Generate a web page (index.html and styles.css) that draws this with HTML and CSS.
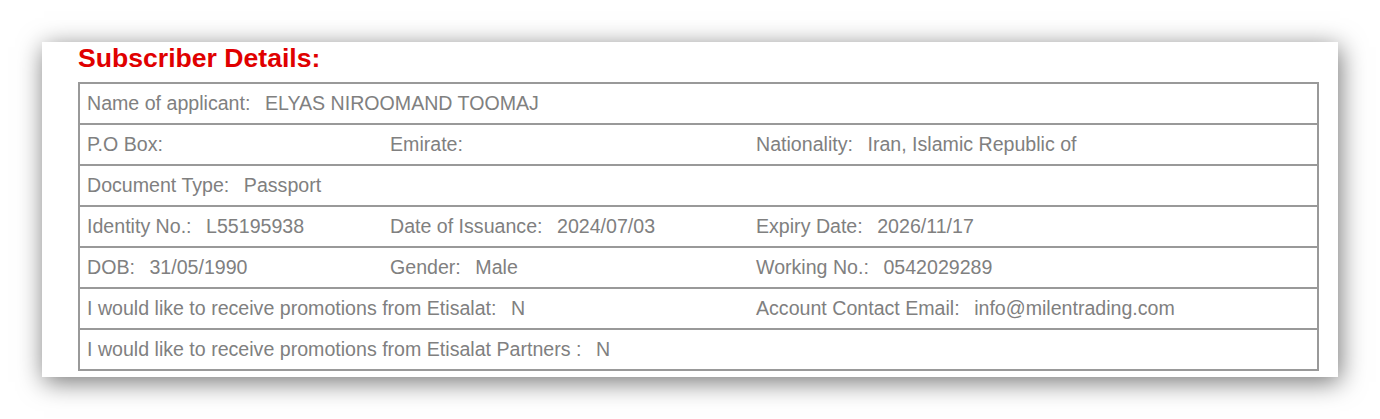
FILE: index.html
```html
<!DOCTYPE html>
<html>
<head>
<meta charset="utf-8">
<link rel="stylesheet" href="styles.css">
</head>
<body>
<div class="page">
  <h2 class="title">Subscriber Details:</h2>
  <div class="table">
    <div class="row">
      <div class="cell span3"><span class="lbl">Name of applicant:</span><span class="val">ELYAS NIROOMAND TOOMAJ</span></div>
    </div>
    <div class="row">
      <div class="cell"><span class="lbl">P.O Box:</span></div>
      <div class="cell"><span class="lbl">Emirate:</span></div>
      <div class="cell"><span class="lbl">Nationality:</span><span class="val">Iran, Islamic Republic of</span></div>
    </div>
    <div class="row">
      <div class="cell span3"><span class="lbl">Document Type:</span><span class="val">Passport</span></div>
    </div>
    <div class="row">
      <div class="cell"><span class="lbl">Identity No.:</span><span class="val">L55195938</span></div>
      <div class="cell"><span class="lbl">Date of Issuance:</span><span class="val">2024/07/03</span></div>
      <div class="cell"><span class="lbl">Expiry Date:</span><span class="val">2026/11/17</span></div>
    </div>
    <div class="row">
      <div class="cell"><span class="lbl">DOB:</span><span class="val">31/05/1990</span></div>
      <div class="cell"><span class="lbl">Gender:</span><span class="val">Male</span></div>
      <div class="cell"><span class="lbl">Working No.:</span><span class="val">0542029289</span></div>
    </div>
    <div class="row">
      <div class="cell span2"><span class="lbl">I would like to receive promotions from Etisalat:</span><span class="val">N</span></div>
      <div class="cell"><span class="lbl">Account Contact Email:</span><span class="val">info@milentrading.com</span></div>
    </div>
    <div class="row">
      <div class="cell span3"><span class="lbl">I would like to receive promotions from Etisalat Partners :</span><span class="val">N</span></div>
    </div>
  </div>
</div>
</body>
</html>
```
FILE: styles.css
```css
html, body {
  margin: 0;
  padding: 0;
  background: #ffffff;
}
body {
  padding: 42px 42px 42px 42px;
  min-height: 419px;
  box-sizing: border-box;
  font-family: "Liberation Sans", Arial, sans-serif;
}
.page {
  width: 1296px;
  height: 335px;
  background: #ffffff;
  box-shadow: 2px 5px 24px rgba(0, 0, 0, 0.55);
  padding: 0 0 0 36px;
  box-sizing: border-box;
}
.title {
  margin: 0;
  padding-top: 1px;
  height: 39px;
  font-size: 26.6px;
  line-height: 30px;
  font-weight: bold;
  color: #e00000;
}
.table {
  width: 1241px;
  border: 2px solid #999999;
  border-bottom: none;
  box-sizing: border-box;
}
.row {
  display: grid;
  grid-template-columns: 303px 366px 1fr;
  height: 41px;
  border-bottom: 2px solid #999999;
  box-sizing: border-box;
}
.cell {
  padding: 0 7px;
  display: flex;
  align-items: center;
  font-size: 19.6px;
  color: #808080;
  white-space: nowrap;
}
.span3 { grid-column: 1 / 4; }
.span2 { grid-column: 1 / 3; }
.lbl { margin-right: 14.5px; }
```
